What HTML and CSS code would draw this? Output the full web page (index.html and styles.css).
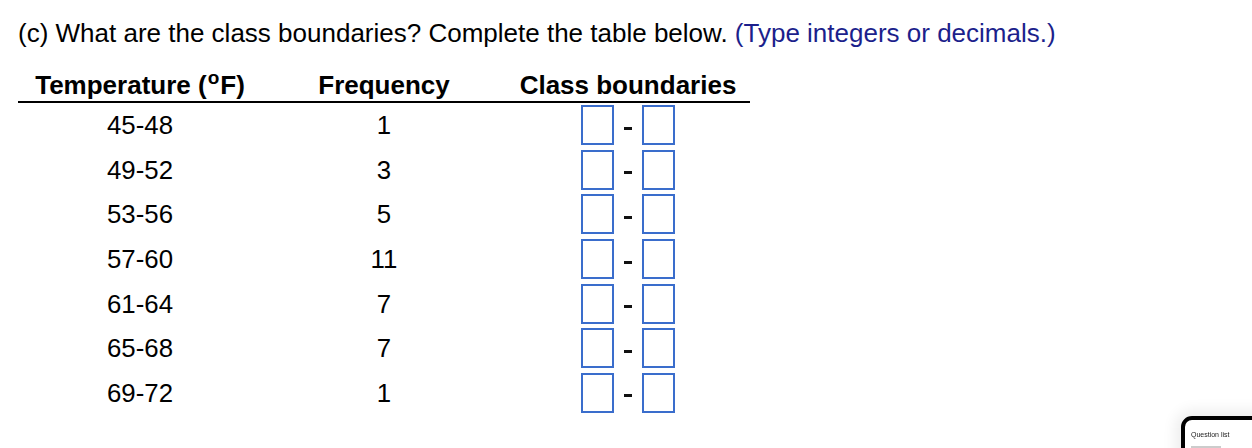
FILE: index.html
```html
<!DOCTYPE html>
<html>
<head>
<meta charset="utf-8">
<link rel="stylesheet" href="styles.css">
</head>
<body>
<div class="page">
  <p class="prompt">(c) What are the class boundaries? Complete the table below. <span class="hint">(Type integers or decimals.)</span></p>
  <div class="table">
    <div class="row head">
      <div class="cell">Temperature (<sup class="deg">o</sup>F)</div>
      <div class="cell">Frequency</div>
      <div class="cell">Class boundaries</div>
    </div>
    <div class="row"><div class="cell">45-48</div><div class="cell">1</div><div class="cell bounds"><span class="box"></span><span class="dash"></span><span class="box"></span></div></div>
    <div class="row"><div class="cell">49-52</div><div class="cell">3</div><div class="cell bounds"><span class="box"></span><span class="dash"></span><span class="box"></span></div></div>
    <div class="row"><div class="cell">53-56</div><div class="cell">5</div><div class="cell bounds"><span class="box"></span><span class="dash"></span><span class="box"></span></div></div>
    <div class="row"><div class="cell">57-60</div><div class="cell">11</div><div class="cell bounds"><span class="box"></span><span class="dash"></span><span class="box"></span></div></div>
    <div class="row"><div class="cell">61-64</div><div class="cell">7</div><div class="cell bounds"><span class="box"></span><span class="dash"></span><span class="box"></span></div></div>
    <div class="row"><div class="cell">65-68</div><div class="cell">7</div><div class="cell bounds"><span class="box"></span><span class="dash"></span><span class="box"></span></div></div>
    <div class="row"><div class="cell">69-72</div><div class="cell">1</div><div class="cell bounds"><span class="box"></span><span class="dash"></span><span class="box"></span></div></div>
  </div>
</div>
<div class="qlist">
  <div class="qtitle">Question list</div>
  <div class="qsub"></div>
</div>
</body>
</html>
```

FILE: styles.css
```css
html, body {
  margin: 0;
  padding: 0;
  background: #fff;
  overflow: hidden;
}
body {
  font-family: "Liberation Sans", Arial, sans-serif;
  color: #000;
  width: 1252px;
  height: 448px;
}
.page {
  padding: 18px 0 0 18px;
}
.prompt {
  margin: 0;
  font-size: 26px;
  line-height: 30px;
  white-space: nowrap;
}
.hint {
  color: #1c1f8c;
}
.table {
  width: 732px;
  margin-top: 22px;
}
.row {
  display: grid;
  grid-template-columns: 244px 244px 244px;
  height: 44.6px;
  align-items: center;
  font-size: 25.8px;
}
.row.head {
  height: 31px;
  align-items: start;
  font-weight: bold;
  border-bottom: 2px solid #000;
  line-height: 30px;
  font-size: 26px;
}
.cell {
  text-align: center;
  line-height: 30px;
}
.deg {
  font-size: 19px;
  vertical-align: 0;
  position: relative;
  top: -10px;
  margin: 0 1px 0 1px;
}
.bounds {
  display: flex;
  justify-content: center;
  align-items: center;
  gap: 10px;
}
.box {
  display: block;
  width: 33px;
  height: 40px;
  box-sizing: border-box;
  border: 2px solid #3a6dcc;
  background: #fff;
}
.dash {
  display: block;
  width: 8px;
  height: 3px;
  background: #111;
  margin-top: 6px;
}
.qlist {
  position: fixed;
  left: 1181px;
  top: 416px;
  width: 110px;
  height: 80px;
  box-sizing: border-box;
  border: 4px solid #000;
  border-radius: 11px;
  background: #fff;
  box-shadow: 0 0 14px 6px rgba(0,0,0,0.07);
  padding: 10px 0 0 6px;
}
.qtitle {
  font-size: 7px;
  line-height: 9px;
  color: #222;
}
.qsub {
  width: 30px;
  height: 3px;
  background: #ccc;
  margin-top: 7px;
}
```
